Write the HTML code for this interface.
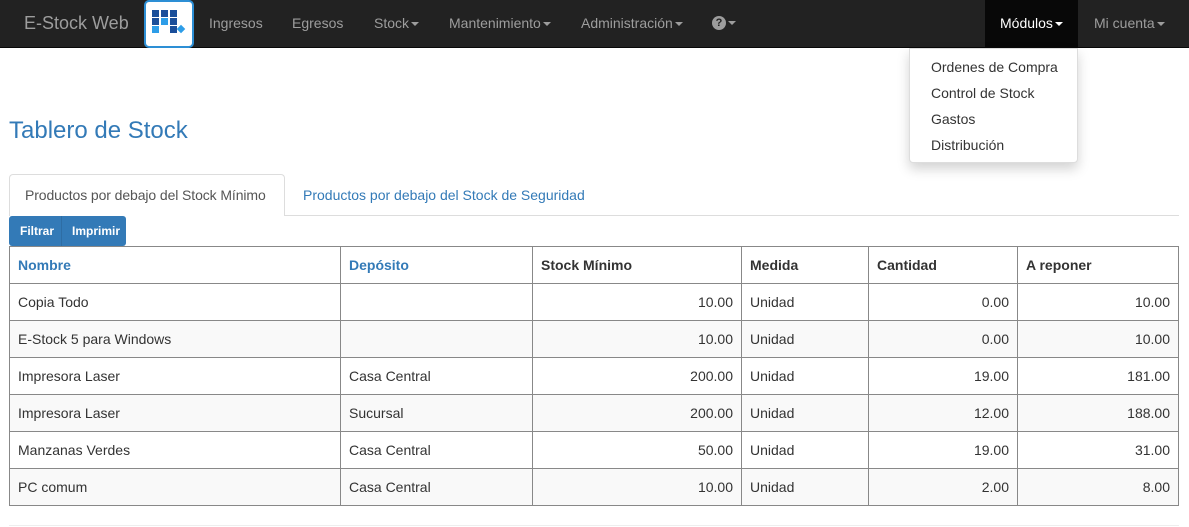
<!DOCTYPE html>
<html><head><meta charset="utf-8"><style>
*{box-sizing:border-box;margin:0;padding:0}
body{width:1189px;height:527px;overflow:hidden;background:#fff;font-family:"Liberation Sans",Arial,sans-serif;font-size:14px;color:#333;position:relative}
.nav{position:absolute;left:0;top:0;width:1189px;height:48px;background:#222;border-bottom:1px solid #080808}
.nav span{position:absolute;top:15px;color:#9d9d9d;font-size:14px;white-space:nowrap}
.caret{display:inline-block;width:0;height:0;border-left:4px solid transparent;border-right:4px solid transparent;border-top:4px solid;vertical-align:middle;margin-left:2px}
.logo{position:absolute;left:144px;top:0;width:50px;height:48px;background:#fff;border:2px solid #2d8fd5;border-radius:5px}
.logo i{position:absolute;width:7px;height:7px}
.dd{position:absolute;left:909px;top:48px;width:169px;height:115px;background:#fff;border:1px solid #ddd;border-radius:0 0 4px 4px;box-shadow:0 6px 12px rgba(0,0,0,.175)}
.dd div{position:absolute;left:21px;font-size:14px;color:#333}
h1{position:absolute;left:9px;top:117px;font-size:24px;font-weight:normal;color:#337ab7}
.tabs{position:absolute;left:9px;top:215px;width:1170px;border-top:1px solid #ddd}
.tab1{position:absolute;left:9px;top:174px;width:276px;height:42px;border:1px solid #ddd;border-bottom:none;border-radius:4px 4px 0 0;background:#fff;color:#555;padding:12px 0 0 15px;font-size:14px;white-space:nowrap;letter-spacing:-0.1px}
.tab2{position:absolute;left:303px;top:187px;color:#337ab7;white-space:nowrap}
.btns{position:absolute;left:9px;top:216px;height:30px;background:#337ab7;border-radius:3px;width:117px;font-size:12px;color:#fff;font-weight:bold}
.btns span{position:absolute;top:8px}
table{position:absolute;left:9px;top:246px;width:1170px;border-collapse:collapse}
td,th{border:1px solid #888;height:37px;padding:0 8px;font-size:14px;text-align:left}
th{background:#fff;font-weight:bold}
th.l{color:#337ab7}
tr:nth-child(odd) td{background:#f9f9f9}
td.r{text-align:right}
.foot{position:absolute;left:9px;top:525px;width:1170px;border-top:1px solid #eee}
</style></head><body>
<div class="nav">
<span style="left:24px;top:13px;font-size:18px">E-Stock Web</span>
<div class="logo">
<i style="left:6px;top:8px;background:#1a4e9a"></i><i style="left:15px;top:8px;background:#1a4e9a"></i><i style="left:24px;top:8px;background:#1a4e9a"></i>
<i style="left:6px;top:16px;background:#1a4e9a"></i><i style="left:15px;top:16px;background:#2d9de8"></i><i style="left:24px;top:16px;background:#1a4e9a"></i>
<i style="left:6px;top:24px;background:#2d9de8"></i><i style="left:24px;top:24px;background:#1a4e9a"></i><i style="left:32px;top:24px;width:6px;height:6px;background:#2d9de8;transform:rotate(45deg)"></i>
</div>
<span style="left:209px">Ingresos</span>
<span style="left:292px">Egresos</span>
<span style="left:374px">Stock<b class="caret"></b></span>
<span style="left:449px">Mantenimiento<b class="caret"></b></span>
<span style="left:581px">Administración<b class="caret"></b></span>
<span style="left:712px;top:14px"><b style="display:inline-block;width:14px;height:14px;border-radius:50%;background:#9d9d9d;color:#222;font-size:11px;text-align:center;line-height:14px;vertical-align:middle">?</b><b class="caret"></b></span>
<div style="position:absolute;left:985px;top:0;width:93px;height:48px;background:#080808"></div>
<span style="left:1000px;color:#fff">Módulos<b class="caret"></b></span>
<span style="left:1094px">Mi cuenta<b class="caret"></b></span>
</div>
<div class="dd">
<div style="top:10px">Ordenes de Compra</div>
<div style="top:36px">Control de Stock</div>
<div style="top:62px">Gastos</div>
<div style="top:88px">Distribución</div>
</div>
<h1>Tablero de Stock</h1>
<div class="tabs"></div>
<div class="tab1">Productos por debajo del Stock Mínimo</div>
<div class="tab2">Productos por debajo del Stock de Seguridad</div>
<div class="btns"><span style="left:11px">Filtrar</span><div style="position:absolute;left:52px;top:0;width:1px;height:30px;background:#2e6da4"></div><span style="left:63px">Imprimir</span></div>
<table>
<tr><th class="l" style="width:331px">Nombre</th><th class="l" style="width:192px">Depósito</th><th style="width:209px">Stock Mínimo</th><th style="width:127px">Medida</th><th style="width:149px">Cantidad</th><th>A reponer</th></tr>
<tr><td>Copia Todo</td><td></td><td class="r">10.00</td><td>Unidad</td><td class="r">0.00</td><td class="r">10.00</td></tr>
<tr><td>E-Stock 5 para Windows</td><td></td><td class="r">10.00</td><td>Unidad</td><td class="r">0.00</td><td class="r">10.00</td></tr>
<tr><td>Impresora Laser</td><td>Casa Central</td><td class="r">200.00</td><td>Unidad</td><td class="r">19.00</td><td class="r">181.00</td></tr>
<tr><td>Impresora Laser</td><td>Sucursal</td><td class="r">200.00</td><td>Unidad</td><td class="r">12.00</td><td class="r">188.00</td></tr>
<tr><td>Manzanas Verdes</td><td>Casa Central</td><td class="r">50.00</td><td>Unidad</td><td class="r">19.00</td><td class="r">31.00</td></tr>
<tr><td>PC comum</td><td>Casa Central</td><td class="r">10.00</td><td>Unidad</td><td class="r">2.00</td><td class="r">8.00</td></tr>
</table>
<div class="foot"></div>
</body></html>
